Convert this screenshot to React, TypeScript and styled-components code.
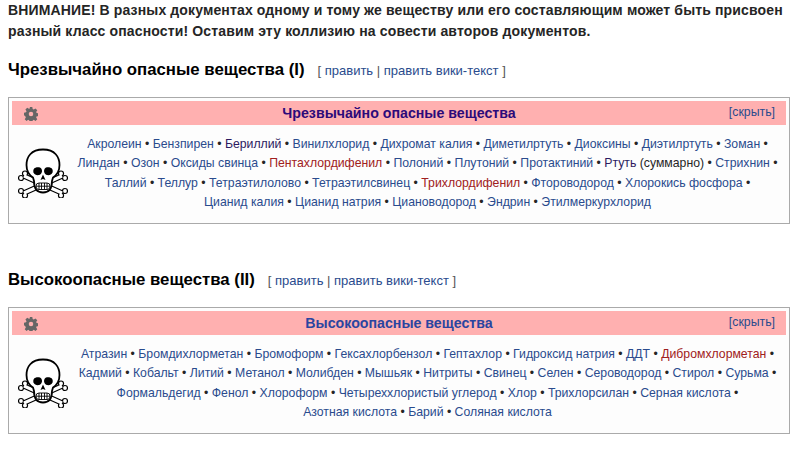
import React from 'react';
import styled, {createGlobalStyle} from 'styled-components';

type Item = { name: string; tone?: 'red' | 'visited' | 'plain'; note?: string };

const i = (name: string, tone?: Item['tone'], note?: string): Item => ({name, tone, note});

const firstClass: Item[][] = [
    [i('Акролеин'), i('Бензпирен'), i('Бериллий', 'visited'), i('Винилхлорид'), i('Дихромат калия'), i('Диметилртуть'), i('Диоксины'), i('Диэтилртуть'), i('Зоман')],
    [i('Линдан'), i('Озон'), i('Оксиды свинца'), i('Пентахлордифенил', 'red'), i('Полоний'), i('Плутоний'), i('Протактиний'), i('Ртуть', 'visited', ' (суммарно)'), i('Стрихнин')],
    [i('Таллий'), i('Теллур'), i('Тетраэтилолово'), i('Тетраэтилсвинец'), i('Трихлордифенил', 'red'), i('Фтороводород'), i('Хлорокись фосфора')],
    [i('Цианид калия'), i('Цианид натрия'), i('Циановодород'), i('Эндрин'), i('Этилмеркурхлорид')],
];

const secondClass: Item[][] = [
    [i('Атразин'), i('Бромдихлорметан'), i('Бромоформ'), i('Гексахлорбензол'), i('Гептахлор'), i('Гидроксид натрия'), i('ДДТ'), i('Дибромхлорметан', 'red')],
    [i('Кадмий'), i('Кобальт'), i('Литий'), i('Метанол'), i('Молибден'), i('Мышьяк'), i('Нитриты'), i('Свинец'), i('Селен'), i('Сероводород'), i('Стирол'), i('Сурьма')],
    [i('Формальдегид'), i('Фенол'), i('Хлороформ'), i('Четыреххлористый углерод'), i('Хлор'), i('Трихлорсилан'), i('Серная кислота')],
    [i('Азотная кислота'), i('Барий'), i('Соляная кислота')],
];

const Gear = () => (
    <svg width="14" height="14" viewBox="0 0 16 16">
        <path fill="#666"
              d="M6.5 0h3l.4 2.300 1.300.6 1.900-1.300 2.100 2.100-1.300 1.900.6 1.300 2.300.4v3l-2.300.4-.6 1.300 1.300 1.900-2.100 2.100-1.900-1.300-1.300.6-.4 2.300h-3l-.4-2.300-1.300-.6-1.900 1.300-2.100-2.100 1.300-1.900-.6-1.300L0 9.500v-3l2.300-.4.6-1.300-1.300-1.900 2.100-2.100 1.900 1.300 1.300-.6z"/>
        <circle cx="8" cy="8" r="2.600" fill="#ffb0b0"/>
    </svg>
);

const bones = 'M6 28 L44 45 M44 28 L6 45';
const knobs: [number, number][] = [[3, 30], [7, 25.500], [47, 30], [43, 25.500], [3, 43], [7, 47.500], [47, 43], [43, 47.500]];

const Skull = () => (
    <svg width="50" height="50" viewBox="0 0 50 50">
        <path d={bones} stroke="#000" strokeWidth="5.500" fill="none"/>
        {knobs.map(([x, y]) => <circle key={`${x}-${y}`} cx={x} cy={y} r="3.100" fill="#000"/>)}
        {knobs.map(([x, y]) => <circle key={`w${x}-${y}`} cx={x} cy={y} r="1.900" fill="#fff"/>)}
        <path d={bones} stroke="#fff" strokeWidth="3.200" fill="none"/>
        <path stroke="#000" strokeWidth="1.800" fill="#fff" strokeLinejoin="round"
              d="M25 1.500 C13 1.500 8.500 9 8.500 17 C8.500 23 11 27 15 29.500 L16 33 C16 41 19 44.500 25 44.500 C31 44.500 34 41 34 33 L35 29.500 C39 27 41.500 23 41.500 17 C41.500 9 37 1.500 25 1.500 Z"/>
        <path fill="#000" d="M22 19.500 C17 18.500 14.500 21 15.500 24.500 C17 28 22 28 23.500 25 C24.500 23 24 20.500 22 19.500 Z"/>
        <path fill="#000" d="M28 19.500 C33 18.500 35.500 21 34.500 24.500 C33 28 28 28 26.500 25 C25.500 23 26 20.500 28 19.500 Z"/>
        <path fill="#000" d="M25 26.500 L22.500 32 L25 31 L27.500 32 Z"/>
        <g stroke="#000" strokeWidth=".9" fill="#fff">
            <rect x="18" y="35" width="14" height="6.500" rx="3"/>
            <path d="M18 38.200 H32 M21 35 V41.500 M23.500 35 V41.500 M26.500 35 V41.500 M29 35 V41.500" fill="none"/>
        </g>
    </svg>
);

const Navbox = ({title, titleVisited, rows}: { title: string; titleVisited?: boolean; rows: Item[][] }) => (
    <Box>
        <TitleBar>
            <GearSlot><Gear/></GearSlot>
            <Title $visited={titleVisited}>{title}</Title>
            <Hide>[скрыть]</Hide>
        </TitleBar>
        <Body>
            <SkullSlot><Skull/></SkullSlot>
            <List>
                {rows.map((row, r) => (
                    <Row key={r}>
                        {row.map((item, n) => (
                            <React.Fragment key={item.name}>
                                <Name $tone={item.tone}>{item.name}</Name>
                                {item.note}
                                {(n < row.length - 1 || r < rows.length - 1) && <Dot> • </Dot>}
                            </React.Fragment>
                        ))}
                    </Row>
                ))}
            </List>
        </Body>
    </Box>
);

export default function App() {
    return (
        <Page>
            <Global/>
            <Notice>
                ВНИМАНИЕ! В разных документах одному и тому же веществу или его составляющим может быть присвоен
                разный класс опасности! Оставим эту коллизию на совести авторов документов.
            </Notice>
            <Heading>
                Чрезвычайно опасные вещества (I)
                <Edit>[ <EditLink>править</EditLink> | <EditLink>править вики-текст</EditLink> ]</Edit>
            </Heading>
            <Navbox title="Чрезвычайно опасные вещества" titleVisited rows={firstClass}/>
            <SecondHeading>
                Высокоопасные вещества (II)
                <Edit>[ <EditLink>править</EditLink> | <EditLink>править вики-текст</EditLink> ]</Edit>
            </SecondHeading>
            <Navbox title="Высокоопасные вещества" rows={secondClass}/>
        </Page>
    );
}

const Global = createGlobalStyle`
  html, body {
    margin: 0;
    background: #fff;
    font-family: "Liberation Sans", Arial, sans-serif;
  }
`

const Page = styled.div`
  width: 804px;
  height: 455px;
  overflow: hidden;
  padding: 0 14px 0 8px;
  box-sizing: border-box;
`

const Notice = styled.p`
  margin: 0;
  font-size: 14px;
  font-weight: bold;
  line-height: 21px;
  color: #252525;
  letter-spacing: .14px;
`

const Heading = styled.h2`
  margin: 18px 0 16px;
  font-size: 16.8px;
  font-weight: bold;
  line-height: 20px;
  color: #000;
`

const SecondHeading = styled(Heading)`
  margin: 46px 0 16px;
`

const Edit = styled.span`
  margin-left: 13px;
  font-size: 13px;
  font-weight: normal;
  color: #555;
`

const EditLink = styled.span`
  color: #2a4b8d;
`

const Box = styled.div`
  height: 127px;
  box-sizing: border-box;
  border: 1px solid #aaa;
  background: #fdfdfd;
  padding: 3px;
  font-size: 12.25px;
  color: #252525;
`

const TitleBar = styled.div`
  height: 24px;
  display: flex;
  align-items: center;
  justify-content: center;
  position: relative;
  background: #ffb0b0;
`

const GearSlot = styled.span`
  position: absolute;
  left: 12px;
  top: 6px;
  height: 14px;
`

const Title = styled.div<{ $visited?: boolean }>`
  font-size: 14.2px;
  font-weight: bold;
  color: ${p => p.$visited ? '#2c0a7a' : '#2a45a0'};
`

const Hide = styled.span`
  position: absolute;
  right: 11px;
  top: 4px;
  font-size: 12.32px;
  color: #2a4b8d;
`

const Body = styled.div`
  display: flex;
  align-items: flex-start;
`

const SkullSlot = styled.div`
  width: 60px;
  flex: none;
  padding: 23px 0 0 6px;
  box-sizing: border-box;
  height: 80px;
`

const List = styled.div`
  flex: 1;
  padding: 10px 3px 0 0;
  text-align: center;
  line-height: 19.3px;
`

const Row = styled.div`
  white-space: nowrap;
`

const Name = styled.span<{ $tone?: Item['tone'] }>`
  color: ${p => p.$tone === 'red' ? '#a02020' : p.$tone === 'visited' ? '#2c1a60' : '#2a4b8d'};
`

const Dot = styled.span`
  color: #252525;
`
